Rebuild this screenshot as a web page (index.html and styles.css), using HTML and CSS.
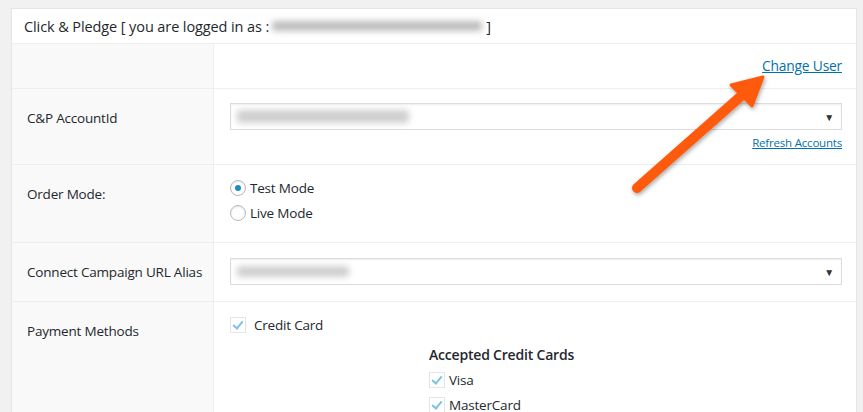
FILE: index.html
```html
<!DOCTYPE html>
<html lang="en">

<head>
    <meta charset="UTF-8" />
    <meta name="viewport" content="width=device-width, initial-scale=1.0" />
    <title>Click &amp; Pledge Settings</title>
    <link rel="stylesheet" href="styles.css">
</head>

<body>
    <div class="panel">
        <div class="panel-head">
            Click &amp; Pledge [ you are logged in as : <span class="masked masked-email"></span> ]
        </div>

        <div class="row row-user">
            <div class="label"></div>
            <div class="field field-right">
                <a href="#" class="link link-big">Change User</a>
            </div>
        </div>

        <div class="row row-account">
            <div class="label">C&amp;P AccountId</div>
            <div class="field">
                <div class="select"><span class="masked masked-account"></span><span class="caret">&#9660;</span></div>
                <div class="field-right"><a href="#" class="link">Refresh Accounts</a></div>
            </div>
        </div>

        <div class="row row-mode">
            <div class="label">Order Mode:</div>
            <div class="field">
                <label class="option"><span class="radio checked"></span>Test Mode</label>
                <label class="option"><span class="radio"></span>Live Mode</label>
            </div>
        </div>

        <div class="row row-alias">
            <div class="label">Connect Campaign URL Alias</div>
            <div class="field">
                <div class="select"><span class="masked masked-alias"></span><span class="caret">&#9660;</span></div>
            </div>
        </div>

        <div class="row row-payment">
            <div class="label">Payment Methods</div>
            <div class="field">
                <label class="option"><span class="check"></span>Credit Card</label>
                <div class="cards">
                    <div class="cards-title">Accepted Credit Cards</div>
                    <label class="option option-small"><span class="check"></span>Visa</label>
                    <label class="option option-small"><span class="check"></span>MasterCard</label>
                </div>
            </div>
        </div>
    </div>

    <!-- pointer arrow drawn over the form -->
    <svg class="arrow" width="863" height="412" viewBox="0 0 863 412">
        <defs>
            <filter id="shadow" x="-20%" y="-20%" width="140%" height="140%">
                <feDropShadow dx="1" dy="2" stdDeviation="2" flood-color="#000" flood-opacity="0.35" />
            </filter>
        </defs>
        <g filter="url(#shadow)">
            <line x1="637" y1="188" x2="740" y2="97" stroke="#fe5a0c" stroke-width="10" stroke-linecap="round" />
            <polygon points="763,77 731,85 752,106" fill="#fe5a0c" stroke="#fe5a0c" stroke-width="3" stroke-linejoin="round" />
        </g>
    </svg>
</body>

</html>
```

FILE: styles.css
```css
* {
    box-sizing: border-box;
}

body {
    margin: 0;
    padding: 8px 6px 0 11px;
    background: #f1f1f1;
    font-family: "Open Sans", "Noto Sans", sans-serif;
    font-size: 13.5px;
    letter-spacing: -0.2px;
    color: #23282d;
    height: 412px;
    overflow: hidden;
}

.panel {
    background: #fff;
    border: 1px solid #e5e5e5;
    border-bottom: none;
    height: 420px;
}

.panel-head {
    height: 35px;
    padding: 0 12px;
    display: flex;
    align-items: center;
    font-size: 14.5px;
    letter-spacing: -0.1px;
    border-bottom: 1px solid #eee;
    white-space: nowrap;
}

.masked {
    display: inline-block;
    background: #c9c9c9;
    filter: blur(3px);
    border-radius: 3px;
}

.masked-email {
    width: 210px;
    height: 10px;
    margin: 0 4px 0 3px;
    background: #bdbdbd;
}

.masked-account {
    width: 172px;
    height: 13px;
    margin-left: 6px;
    background: #cfcfcf;
}

.masked-alias {
    width: 112px;
    height: 11px;
    margin-left: 6px;
    background: #cfcfcf;
}

.row {
    display: flex;
    border-bottom: 1px solid #eee;
}

.row-user { height: 45px; }
.row-account { height: 76px; }
.row-mode { height: 78px; }
.row-alias { height: 59px; }
.row-payment { height: 120px; border-bottom: none; }

.label {
    width: 202px;
    flex: none;
    background: #f9f9f9;
    border-right: 1px solid #eee;
    padding: 19px 15px 0;
    line-height: 20px;
    white-space: nowrap;
}

.field {
    flex: 1;
    padding: 14px 14px 0 16px;
}

.row-user .field {
    padding-top: 12px;
}

.field-right {
    display: flex;
    justify-content: flex-end;
}

.link {
    color: #0073aa;
    font-size: 11.5px;
    text-decoration: underline;
}

.link-big {
    font-size: 13.8px;
}

.row-account .field-right {
    margin-top: 5px;
}

.select {
    height: 27px;
    border: 1px solid #ddd;
    box-shadow: inset 0 1px 2px rgba(0, 0, 0, 0.07);
    display: flex;
    align-items: center;
    justify-content: space-between;
    padding-right: 7px;
}

.caret {
    font-size: 10px;
    color: #333;
}

.option {
    display: flex;
    align-items: center;
    height: 25px;
    white-space: nowrap;
}

.row-mode .field {
    padding-top: 10px;
}

.row-alias .field {
    padding-top: 15px;
}

.row-payment .field {
    padding-top: 10px;
}

.radio {
    width: 16px;
    height: 16px;
    border: 1px solid #b4b9be;
    border-radius: 50%;
    margin-right: 4px;
    box-shadow: inset 0 1px 2px rgba(0, 0, 0, 0.1);
    display: flex;
    align-items: center;
    justify-content: center;
}

.radio.checked::before {
    content: "";
    width: 6px;
    height: 6px;
    border-radius: 50%;
    background: #1e8cbe;
}

.check {
    width: 16px;
    height: 16px;
    border: 1px solid #e2e4e7;
    margin-right: 8px;
    position: relative;
}

.check::before {
    content: "";
    position: absolute;
    left: 4px;
    top: 1px;
    width: 4px;
    height: 8px;
    border: solid #7fc1e1;
    border-width: 0 2px 2px 0;
    transform: rotate(40deg);
}

.cards {
    padding-left: 199px;
    padding-top: 5px;
}

.cards-title {
    font-size: 14px;
    font-weight: 600;
    height: 25px;
    display: flex;
    align-items: center;
}

.option-small .check {
    margin-right: 4px;
}

.arrow {
    position: absolute;
    left: 0;
    top: 0;
    pointer-events: none;
}
```
